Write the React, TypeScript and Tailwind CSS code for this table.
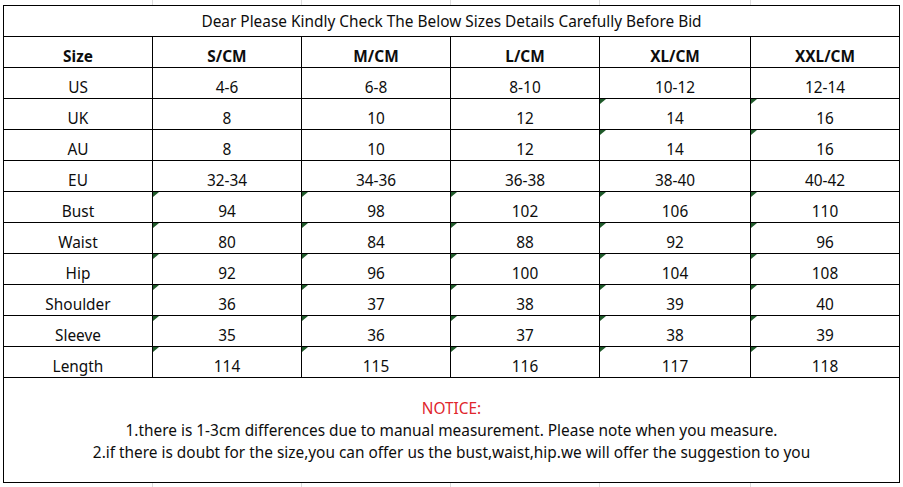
import React from "react";

const COLS = "grid grid-cols-[149px_149px_149px_149px_151px_149px]";

const headers = ["Size", "S/CM", "M/CM", "L/CM", "XL/CM", "XXL/CM"];

// marks = which value columns carry the little green "number as text" flag
const rows: { label: string; values: string[]; marks: number[] }[] = [
  { label: "US", values: ["4-6", "6-8", "8-10", "10-12", "12-14"], marks: [] },
  { label: "UK", values: ["8", "10", "12", "14", "16"], marks: [3, 4] },
  { label: "AU", values: ["8", "10", "12", "14", "16"], marks: [3, 4] },
  { label: "EU", values: ["32-34", "34-36", "36-38", "38-40", "40-42"], marks: [] },
  { label: "Bust", values: ["94", "98", "102", "106", "110"], marks: [0, 1, 2, 3, 4] },
  { label: "Waist", values: ["80", "84", "88", "92", "96"], marks: [0, 1, 2, 3, 4] },
  { label: "Hip", values: ["92", "96", "100", "104", "108"], marks: [0, 1, 2, 3, 4] },
  { label: "Shoulder", values: ["36", "37", "38", "39", "40"], marks: [0, 1, 2, 3, 4] },
  { label: "Sleeve", values: ["35", "36", "37", "38", "39"], marks: [0, 1, 2, 3, 4] },
  { label: "Length", values: ["114", "115", "116", "117", "118"], marks: [0, 1, 2, 3, 4] },
];

function Mark() {
  return (
    <svg className="absolute left-0 top-0" width="6" height="6" viewBox="0 0 6 6">
      <polygon points="0,0 6,0 0,5" fill="#1f5a2a" />
    </svg>
  );
}

function Cell({ children, bold, mark }: { children: React.ReactNode; bold?: boolean; mark?: boolean }) {
  return (
    <div
      className={`relative h-[31px] border-r border-b border-black flex items-end justify-center leading-[20px] ${
        bold ? "font-bold" : ""
      }`}
    >
      {mark && <Mark />}
      {children}
    </div>
  );
}

function GridStrip() {
  return (
    <div className={`${COLS} h-[5px] pl-[4px]`}>
      {headers.map((h, i) => (
        <div key={h} className={i < 5 ? "border-r border-[#dcdcdc]" : ""} />
      ))}
    </div>
  );
}

export default function App() {
  return (
    <div
      className="w-[903px] h-[487px] bg-white text-[15.4px] text-[#0d0d0d] overflow-hidden"
      style={{ fontFamily: '"Noto Sans", "Open Sans", sans-serif' }}
    >
      <GridStrip />
      <div className={`${COLS} ml-[3px] w-[897px] border-l border-t border-black`}>
        <div className="col-span-6 h-[31px] pt-[2px] border-r border-b border-black flex items-center justify-center leading-[20px]">
          Dear Please Kindly Check The Below Sizes Details Carefully Before Bid
        </div>

        {headers.map((h) => (
          <Cell key={h} bold>
            {h}
          </Cell>
        ))}

        {rows.map((r) => (
          <React.Fragment key={r.label}>
            <Cell>{r.label}</Cell>
            {r.values.map((v, i) => (
              <Cell key={i} mark={r.marks.includes(i)}>
                {v}
              </Cell>
            ))}
          </React.Fragment>
        ))}

        <div className="col-span-6 h-[105px] border-r border-b border-black pt-[20px] flex flex-col items-center leading-[22px]">
          <div className="text-[#e0262c]">NOTICE:</div>
          <div>1.there is 1-3cm differences due to manual measurement. Please note when you measure.</div>
          <div>2.if there is doubt for the size,you can offer us the bust,waist,hip.we will offer the suggestion to you</div>
        </div>
      </div>
      <GridStrip />
    </div>
  );
}
